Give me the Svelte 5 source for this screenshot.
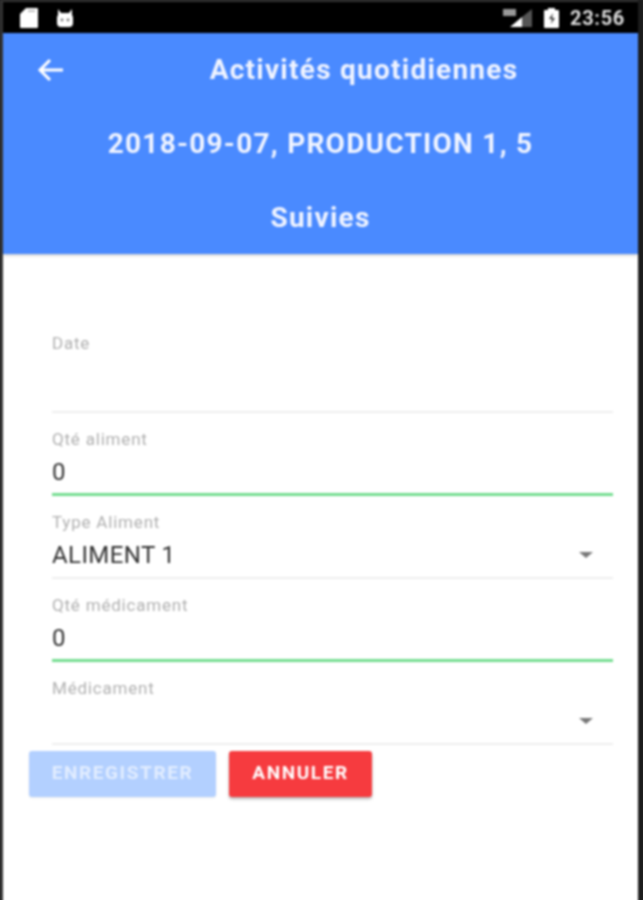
<script>
  const fields = [
    { label: "Date", value: "", kind: "date" },
    { label: "Qté aliment", value: "0", kind: "input" },
    { label: "Type Aliment", value: "ALIMENT 1", kind: "select" },
    { label: "Qté médicament", value: "0", kind: "input" },
    { label: "Médicament", value: "", kind: "select" }
  ];
</script>

<div class="screen">
  <div class="statusbar">
    <div class="icons">
      <svg width="20" height="22" viewBox="0 0 20 22">
        <path d="M7 1h11a1 1 0 0 1 1 1v18a1 1 0 0 1-1 1H2a1 1 0 0 1-1-1V7z" fill="#fff" />
        <path d="M9 4h7" stroke="#aaa" stroke-width="1.5" />
      </svg>
      <svg width="22" height="20" viewBox="0 0 22 20">
        <path d="M4 1l3 4h8l3-4v6q1 1 1 3v5q0 4-4 4H7q-4 0-4-4v-5q0-2 1-3z" fill="#fff" />
        <circle cx="8" cy="12" r="1.4" fill="#777" />
        <circle cx="14" cy="12" r="1.4" fill="#777" />
      </svg>
    </div>
    <div class="icons right">
      <svg width="30" height="20" viewBox="0 0 30 20">
        <path d="M19 9v10H7z" fill="#fff" />
        <path d="M19 9l10-8v18H19z" fill="#555" />
        <rect x="0" y="1" width="13" height="7" fill="#999" />
      </svg>
      <svg width="17" height="22" viewBox="0 0 17 22">
        <path d="M5 1h7v2h3a1 1 0 0 1 1 1v16a1 1 0 0 1-1 1H2a1 1 0 0 1-1-1V4a1 1 0 0 1 1-1h3z" fill="#fff" />
        <path d="M10 6l-4 6h3l-1 5 4-6H9z" fill="#333" />
      </svg>
      <span class="clock">23:56</span>
    </div>
  </div>

  <header>
    <div class="line first">
      <svg class="back" width="28" height="24" viewBox="0 0 28 24">
        <path d="M26 12H3M13 2L3 12l10 10" fill="none" stroke="#fff" stroke-width="3" />
      </svg>
      <span>Activités quotidiennes</span>
    </div>
    <div class="line">2018-09-07, PRODUCTION 1, 5</div>
    <div class="line">Suivies</div>
  </header>

  <main>
    <form>
      {#each fields as f}
        <div class="field {f.kind}">
          <div class="label">{f.label}</div>
          <div class="value">
            <span>{f.value}</span>
            {#if f.kind === "select"}
              <i class="caret"></i>
            {/if}
          </div>
        </div>
      {/each}
    </form>
    <div class="buttons">
      <button type="button" class="save" disabled>ENREGISTRER</button>
      <button type="button" class="cancel">ANNULER</button>
    </div>
  </main>
</div>

<style>
  :global(body) {
    background: #222;
    overflow: hidden;
  }
  .screen {
    width: 643px;
    height: 906px;
    box-sizing: border-box;
    border-left: 3px solid #333;
    border-right: 5px solid #1c1c1c;
    background: #fff;
    font-family: Roboto, "Liberation Sans", sans-serif;
    display: flex;
    flex-direction: column;
    overflow: hidden;
    filter: blur(0.8px);
  }
  .statusbar {
    height: 33px;
    flex: none;
    box-sizing: border-box;
    background: #000;
    border-top: 2px solid #333;
    margin: 0 -5px 0 -3px;
    padding: 0 18px 0 19px;
    display: flex;
    justify-content: space-between;
    align-items: center;
  }
  .icons {
    display: flex;
    align-items: center;
    gap: 15px;
  }
  .icons.right {
    gap: 10px;
  }
  .clock {
    color: #ddd;
    font-size: 20px;
    font-weight: 700;
    letter-spacing: 0.7px;
  }
  header {
    flex: none;
    height: 221px;
    box-sizing: border-box;
    background: #4a8aff;
    box-shadow: 0 1px 3px rgba(0, 0, 0, 0.25);
    color: #f0f4ff;
    font-size: 28px;
    font-weight: 700;
    letter-spacing: 1.25px;
    text-align: center;
    display: flex;
    flex-direction: column;
    position: relative;
    z-index: 1;
  }
  .line {
    height: 74px;
    line-height: 74px;
  }
  .first {
    position: relative;
    padding-left: 87px;
  }
  .back {
    position: absolute;
    left: 34px;
    top: 25px;
  }
  main {
    flex: 1;
    padding-top: 76px;
  }
  form {
    margin: 0 25px 0 49px;
  }
  .field {
    height: 83px;
    box-sizing: border-box;
    border-bottom: 2px solid #eee;
    display: flex;
    flex-direction: column;
    padding-top: 17px;
  }
  .field.date {
    padding-top: 4px;
  }
  .field.input {
    border-bottom: 3px solid #74dd90;
  }
  .label {
    color: #b0b0b0;
    font-size: 17px;
    line-height: 18px;
    letter-spacing: 0.8px;
  }
  .value {
    color: #333;
    font-size: 24px;
    line-height: 30px;
    letter-spacing: 0.4px;
    margin-top: 9px;
    display: flex;
    justify-content: space-between;
    align-items: center;
    min-height: 30px;
  }
  .caret {
    width: 0;
    height: 0;
    margin-right: 20px;
    border-left: 7px solid transparent;
    border-right: 7px solid transparent;
    border-top: 6px solid #777;
  }
  .buttons {
    display: flex;
    gap: 13px;
    margin: 6px 0 0 26px;
  }
  button {
    height: 46px;
    border: none;
    border-radius: 3px;
    font-family: inherit;
    font-size: 19px;
    font-weight: 700;
    letter-spacing: 1.6px;
    color: #fff;
    padding: 0 0 3px;
  }
  .save {
    width: 187px;
    background: #b3d0ff;
    color: #e2edff;
    box-shadow: 0 1px 2px rgba(0, 0, 0, 0.08);
  }
  .cancel {
    width: 143px;
    background: #f63b3f;
    box-shadow: 0 2px 3px rgba(0, 0, 0, 0.3);
  }
</style>
